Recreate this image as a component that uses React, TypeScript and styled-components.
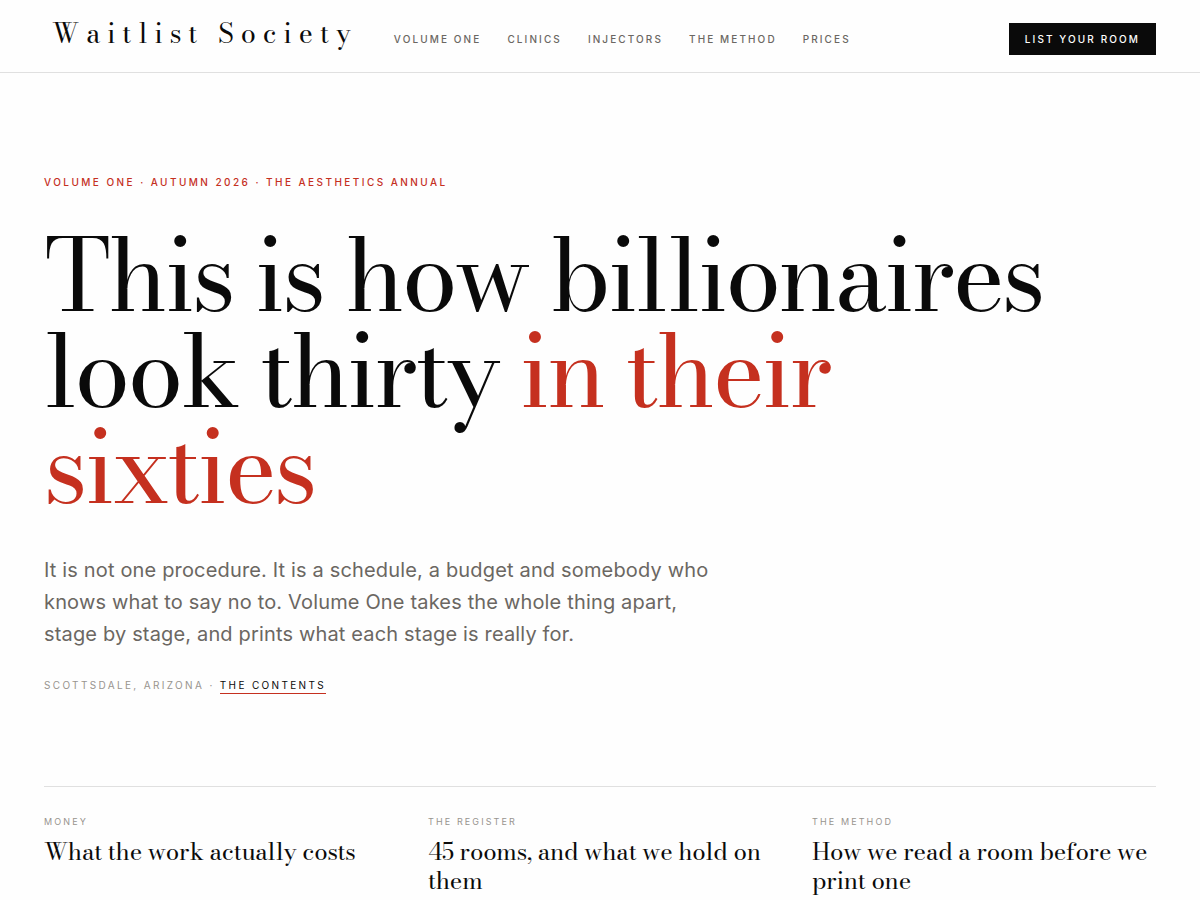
import React from "react";
import styled, { createGlobalStyle } from "styled-components";

const serif = `"Bodoni Moda", "Bodoni MT", Didot, "Liberation Serif", serif`;
const sans = `Inter, "Liberation Sans", sans-serif`;

const color = {
  ink: "#0a0a0a",
  body: "#6b6762",
  muted: "#98948e",
  accent: "#c5301f",
  rule: "#e0e0e0",
};

const GlobalStyle = createGlobalStyle`
  *, *::before, *::after { box-sizing: border-box; }
  body {
    margin: 0;
    background: #fefefe;
    color: ${color.ink};
    font-family: ${sans};
    -webkit-font-smoothing: antialiased;
  }
  a { color: inherit; text-decoration: none; }
  h1, h2, p { margin: 0; font-weight: 400; }
`;

const Header = styled.header`
  display: flex;
  align-items: center;
  gap: 36px;
  padding: 16px 44px;
  min-height: 73px;
  border-bottom: 1px solid ${color.rule};
`;

const Brand = styled.a`
  padding: 0 0 4px 8px;
  font-family: ${serif};
  font-size: 27px;
  line-height: 34px;
  letter-spacing: 0.26em;
  white-space: nowrap;
`;

const Nav = styled.nav`
  display: flex;
  flex: 1;
  gap: 26px;
  padding-top: 6px;
`;

const NavLink = styled.a`
  color: ${color.body};
  font-size: 10px;
  font-weight: 500;
  line-height: 16px;
  letter-spacing: 0.21em;
  text-transform: uppercase;
  white-space: nowrap;
`;

const ListButton = styled.button`
  margin-top: 6px;
  padding: 8px 16px;
  border: 0;
  background: ${color.ink};
  color: #fefefe;
  font-family: ${sans};
  font-size: 10px;
  font-weight: 500;
  line-height: 16px;
  letter-spacing: 0.21em;
  text-transform: uppercase;
  white-space: nowrap;
  cursor: pointer;
`;

const Main = styled.main`
  padding: 0 44px;
`;

const Hero = styled.section`
  padding: 101px 0 93px;
`;

const Eyebrow = styled.p`
  color: ${color.accent};
  font-size: 10px;
  font-weight: 500;
  line-height: 16px;
  letter-spacing: 0.245em;
  text-transform: uppercase;
`;

const Headline = styled.h1`
  max-width: 1060px;
  margin-top: 37px;
  font-family: ${serif};
  font-size: 100px;
  line-height: 96px;
  letter-spacing: -0.03em;

  em {
    color: ${color.accent};
    font-style: normal;
  }
`;

const Lede = styled.p`
  max-width: 680px;
  margin-top: 39px;
  color: ${color.body};
  font-size: 20px;
  line-height: 32px;
  letter-spacing: 0.008em;
`;

const Dateline = styled.p`
  margin-top: 27px;
  color: ${color.muted};
  font-size: 10px;
  line-height: 16px;
  letter-spacing: 0.235em;
  text-transform: uppercase;
`;

const ContentsLink = styled.a`
  padding-bottom: 2px;
  border-bottom: 1px solid ${color.accent};
  color: ${color.ink};
`;

const Features = styled.section`
  display: grid;
  grid-template-columns: repeat(3, 1fr);
  gap: 40px;
  padding-top: 28px;
  border-top: 1px solid ${color.rule};
`;

const Kicker = styled.p`
  color: ${color.muted};
  font-size: 9px;
  line-height: 14px;
  letter-spacing: 0.235em;
  text-transform: uppercase;
`;

const FeatureTitle = styled.h2`
  margin-top: 8px;
  font-family: ${serif};
  font-size: 24px;
  line-height: 29px;
  letter-spacing: -0.01em;
`;

const links = ["Volume One", "Clinics", "Injectors", "The Method", "Prices"];

const features = [
  { kicker: "Money", title: "What the work actually costs" },
  { kicker: "The Register", title: "45 rooms, and what we hold on them" },
  { kicker: "The Method", title: "How we read a room before we print one" },
];

export default function App() {
  return (
    <>
      <GlobalStyle />
      <Header>
        <Brand href="#">Waitlist Society</Brand>
        <Nav>
          {links.map((label) => (
            <NavLink key={label} href="#">{label}</NavLink>
          ))}
        </Nav>
        <ListButton type="button">List your room</ListButton>
      </Header>
      <Main>
        <Hero>
          <Eyebrow>Volume One · Autumn 2026 · The Aesthetics Annual</Eyebrow>
          <Headline>
            This is how billionaires look thirty <em>in their sixties</em>
          </Headline>
          <Lede>
            It is not one procedure. It is a schedule, a budget and somebody who
            knows what to say no to. Volume One takes the whole thing apart,
            stage by stage, and prints what each stage is really for.
          </Lede>
          <Dateline>
            Scottsdale, Arizona · <ContentsLink href="#contents">The contents</ContentsLink>
          </Dateline>
        </Hero>
        <Features id="contents">
          {features.map(({ kicker, title }) => (
            <a key={kicker} href="#">
              <Kicker>{kicker}</Kicker>
              <FeatureTitle>{title}</FeatureTitle>
            </a>
          ))}
        </Features>
      </Main>
    </>
  );
}
